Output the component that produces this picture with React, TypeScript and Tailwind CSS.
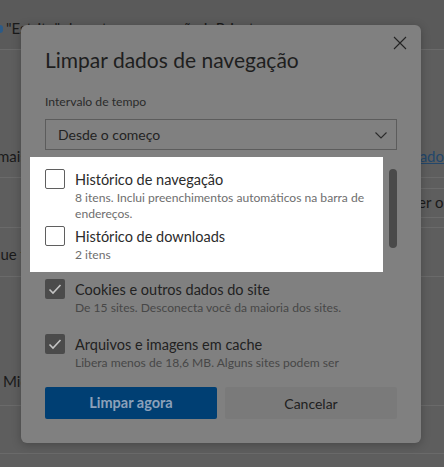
import React from 'react'

const rows = [
  {
    label: 'Histórico de navegação',
    desc: ['8 itens. Inclui preenchimentos automáticos na barra de', 'endereços.'],
    checked: false,
    gap: 'mb-[4px]',
  },
  {
    label: 'Histórico de downloads',
    desc: ['2 itens'],
    checked: false,
    gap: '',
  },
  {
    label: 'Cookies e outros dados do site',
    desc: ['De 15 sites. Desconecta você da maioria dos sites.'],
    checked: true,
    gap: 'mb-[18px]',
  },
  {
    label: 'Arquivos e imagens em cache',
    desc: ['Libera menos de 18,6 MB. Alguns sites podem ser', 'mais lentos para carregar na próxima visita.'],
    checked: true,
    gap: '',
  },
]

function Check({ checked, lit }: { checked: boolean; lit: boolean }) {
  if (checked) {
    return (
      <div className="flex h-[20px] w-[20px] shrink-0 items-center justify-center rounded-[2px] bg-[#4b4b4b]">
        <svg width="20" height="20" viewBox="0 0 20 20" fill="none">
          <path d="M4.5 10.5 L8 14 L15.5 6" stroke="#c4c4c4" strokeWidth="1.6" />
        </svg>
      </div>
    )
  }
  return (
    <div
      className={`h-[20px] w-[20px] shrink-0 rounded-[2px] border ${lit ? 'border-[#5f5f5f] bg-white' : 'border-[#333] bg-[#808080]'}`}
    />
  )
}

function Row({ row, lit }: { row: (typeof rows)[number]; lit: boolean }) {
  return (
    <div className={`flex gap-[10px] ${row.gap}`}>
      <Check checked={row.checked} lit={lit} />
      <div className="flex flex-col whitespace-nowrap pt-[2px]">
        <div className={`text-[14.5px] leading-[18px] ${lit ? 'text-[#2b2b2b]' : 'text-[#222]'}`}>{row.label}</div>
        <div className={`mt-[1px] text-[12.1px] leading-[16px] ${lit ? 'text-[#6e6e6e]' : 'text-[#474747]'}`}>
          {row.desc.map((d) => (
            <div key={d}>{d}</div>
          ))}
        </div>
      </div>
    </div>
  )
}

export default function App() {
  return (
    <div className="relative h-[467px] w-[444px] overflow-hidden bg-[#5e5e5e] font-['Lato',sans-serif] text-[15px] text-[#1a1a1a]">
      {/* página de configurações por trás */}
      <div className="flex h-[50px] items-center gap-[3px] border-b border-[#6a6a6a] bg-[#5a5a5a] pt-[8px] whitespace-nowrap">
        <span className="h-[8px] w-[3px] rounded-r-full bg-[#2c5a86]" />
        <span>"Estrito" durante a navegação InPrivate</span>
      </div>
      <div className="flex h-[128px] items-end justify-between border-b border-[#6a6a6a] pb-[11px] leading-[20px] whitespace-nowrap">
        <span className="-ml-[3px]">mais</span>
        <span className="text-[#23476b] underline">ado</span>
      </div>
      <div className="flex h-[50px] items-center border-b border-[#6a6a6a] whitespace-nowrap">
        <div className="ml-[402px] flex h-[30px] items-center rounded-[2px] border border-[#6b6b6b] pl-[15px] pr-[10px]">
          er o que limpar
        </div>
      </div>
      <div className="flex h-[49px] items-center border-b border-[#6a6a6a] pt-[4px] whitespace-nowrap">
        <span className="-ml-[8px]">que fecham</span>
      </div>
      <div className="flex h-[129px] items-end border-b border-[#6a6a6a] pb-[13px] whitespace-nowrap">
        <span className="ml-[3px]">Microsoft</span>
      </div>
      <div className="h-[48px] border-b border-[#6a6a6a]" />

      {/* diálogo */}
      <div className="absolute left-[21px] top-[25px] flex h-[418px] w-[400px] flex-col rounded-[6px] bg-[#808080] px-[24px] pb-[24px] pt-[21px] shadow-[0_2px_10px_rgba(0,0,0,0.25)]">
        <button className="absolute right-[14px] top-[11px] flex h-[14px] w-[14px] items-center justify-center">
          <svg width="14" height="14" viewBox="0 0 14 14" fill="none">
            <path d="M1 1 L13 13 M13 1 L1 13" stroke="#232323" strokeWidth="1.1" />
          </svg>
        </button>

        <h1 className="text-[21px] leading-[28px] text-[#1e1e1e]">Limpar dados de navegação</h1>

        <div className="mt-[19px] text-[12.2px] leading-[18px] text-[#2b2b2b]">Intervalo de tempo</div>
        <div className="mt-[8px] flex h-[31px] items-center justify-between border border-[#5c5c5c] pl-[12px] pr-[8px]">
          <span className="text-[14px] leading-[18px] text-[#232323]">Desde o começo</span>
          <svg width="14" height="14" viewBox="0 0 14 14" fill="none">
            <path d="M1.5 4.5 L7 10 L12.5 4.5" stroke="#2a2a2a" strokeWidth="1.1" />
          </svg>
        </div>

        <div className="-ml-[15px] mt-[7px] flex h-[212px] overflow-hidden pl-[15px]">
          <div className="w-[323px]">
            <div className="-mx-[15px] mb-[7px] bg-white px-[15px] pb-[9px] pt-[12px]">
              <Row row={rows[0]} lit />
              <Row row={rows[1]} lit />
            </div>
            <Row row={rows[2]} lit={false} />
            <Row row={rows[3]} lit={false} />
          </div>
          <div className="ml-auto mt-[12px] h-[79px] w-[8px] shrink-0 rounded-full bg-[#4a4a4a]" />
        </div>

        <div className="mt-[18px] flex gap-[8px]">
          <button className="h-[32px] flex-1 rounded-[2px] bg-[#003f73] text-[14.5px] font-bold text-[#8ca1ba]">
            Limpar agora
          </button>
          <button className="h-[32px] flex-1 rounded-[2px] bg-[#7a7a7a] text-[14px] text-[#202020]">
            Cancelar
          </button>
        </div>
      </div>
    </div>
  )
}
